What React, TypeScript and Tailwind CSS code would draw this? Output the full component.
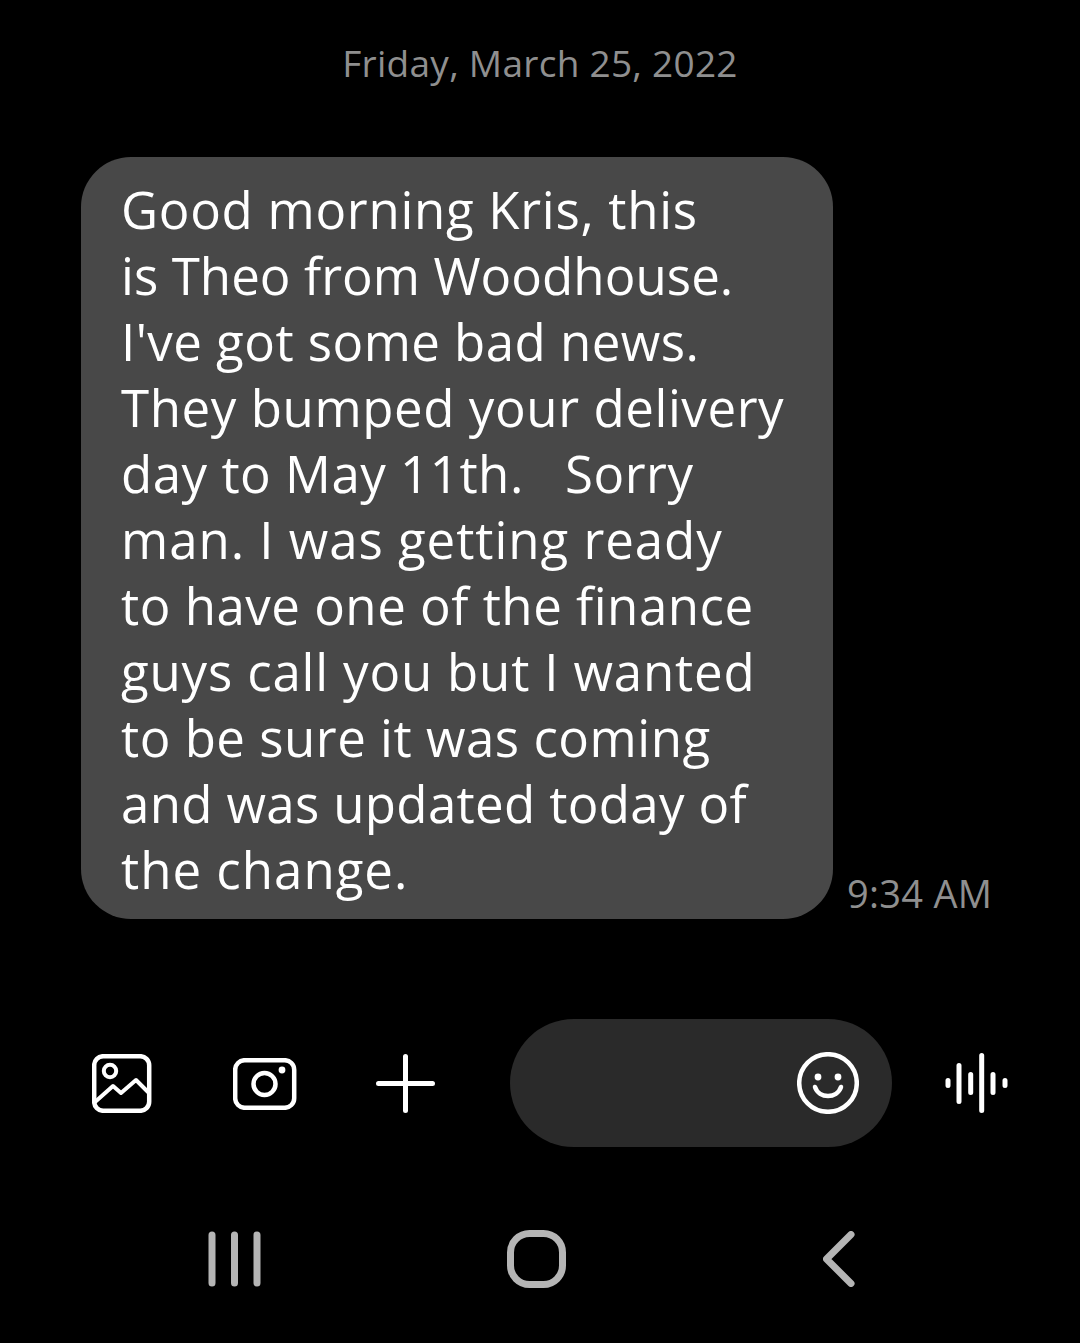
const F = '"Open Sans", "Noto Sans", sans-serif';
const lines = [
  { text: "Good morning Kris, this", cls: "tracking-[0.72px]" },
  { text: "is Theo from Woodhouse.", cls: "tracking-[0.07px]" },
  { text: "I've got some bad news.", cls: "tracking-[0.46px]" },
  { text: "They bumped your delivery", cls: "tracking-[0.59px]" },
  { text: "day to May 11th.\u00A0\u00A0 Sorry", cls: "tracking-[0.51px]" },
  { text: "man. I was getting ready", cls: "tracking-[0.96px]" },
  { text: "to have one of the finance", cls: "tracking-[0.51px]" },
  { text: "guys call you but I wanted", cls: "tracking-[0.82px]" },
  { text: "to be sure it was coming", cls: "tracking-[0.51px]" },
  { text: "and was updated today of", cls: "tracking-[0.34px]" },
  { text: "the change.", cls: "tracking-[1px]" },
];
export default function App() {
  return (
    <div className="w-[1080px] h-[1343px] bg-black flex flex-col overflow-hidden" style={{ fontFamily: F }}>
      <div className="h-[157px] pt-[38px] text-center text-[37px] leading-[50px] text-[#8f8f8f] tracking-[0.27px]">Friday, March 25, 2022</div>
      <div className="flex items-end pl-[81px]">
        <div className="w-[752px] h-[762px] rounded-[50px] bg-[#484848] pl-[40px] pt-[19px] text-[51px] leading-[66px] text-white">
          {lines.map((l) => <div key={l.text} className={`whitespace-pre ${l.cls}`}>{l.text}</div>)}
        </div>
        <div className="ml-[14px] mb-[1px] text-[38px] leading-[50px] tracking-[0.3px] text-[#8f8f8f]">9:34 AM</div>
      </div>
      <div className="mt-[100px] h-[128px] flex items-center">
        <svg className="ml-[92px] mt-[1px] w-[60px] h-[59px]" viewBox="0 0 60 59" fill="none" stroke="#fff" strokeWidth="4.5" strokeLinecap="round" strokeLinejoin="round">
          <rect x="2.2" y="2.2" width="55" height="54.6" rx="9" />
          <circle cx="18" cy="17" r="6.2" strokeWidth="4" />
          <path d="M3 48 L21 32 L29 39 L44 26 L57 39" strokeWidth="4" />
        </svg>
        <svg className="ml-[81px] mt-[2px] w-[64px] h-[52px]" viewBox="0 0 64 52" fill="none" stroke="#fff" strokeWidth="4.5">
          <rect x="2.2" y="2.2" width="59" height="47.6" rx="9.5" />
          <circle cx="31.5" cy="26" r="11" />
          <circle cx="49" cy="12" r="3.4" fill="#fff" stroke="none" />
        </svg>
        <svg className="ml-[79px] mt-[1px] w-[59px] h-[59px]" viewBox="0 0 59 59" fill="none" stroke="#fff" strokeWidth="5" strokeLinecap="round">
          <path d="M29.5 2.5 V56.5 M2.5 29.5 H56.5" />
        </svg>
        <div className="ml-[75px] w-[382px] h-[128px] rounded-full bg-[#2a2a2a] flex items-center justify-end pr-[33px]">
          <svg className="w-[62px] h-[62px]" viewBox="0 0 62 62" fill="none" stroke="#fff" strokeWidth="4.5" strokeLinecap="round">
            <circle cx="31" cy="31" r="28.8" />
            <circle cx="21" cy="25" r="3.4" fill="#fff" stroke="none" />
            <circle cx="41" cy="25" r="3.4" fill="#fff" stroke="none" />
            <path d="M18 35 C 22 47, 40 47, 44 35" />
          </svg>
        </div>
        <svg className="ml-[53px] w-[64px] h-[62px]" viewBox="0 0 64 62" fill="none" stroke="#fff" strokeLinecap="round" strokeWidth="5">
          <path d="M3 28.5 V33.5 M14 13.5 V49.5 M25.7 22.5 V40.5 M36.7 3.5 V58.5 M48 22.5 V40.5 M60 28.5 V33.5" />
        </svg>
      </div>
      <div className="mt-[83px] h-[58px] flex items-center">
        <svg className="ml-[208px] w-[54px] h-[56px]" viewBox="0 0 54 56" fill="none" stroke="#b5b5b5" strokeWidth="7" strokeLinecap="round">
          <path d="M4 4 V52 M26.5 4 V52 M49 4 V52" />
        </svg>
        <svg className="ml-[245px] w-[60px] h-[58px]" viewBox="0 0 60 58" fill="none" stroke="#b5b5b5" strokeWidth="7">
          <rect x="3.5" y="3.5" width="52" height="51" rx="19" />
        </svg>
        <svg className="ml-[256px] w-[34px] h-[56px]" viewBox="0 0 34 56" fill="none" stroke="#b5b5b5" strokeWidth="7" strokeLinecap="round" strokeLinejoin="round">
          <path d="M28 3.5 L3.5 28 L28 52.5" />
        </svg>
      </div>
    </div>
  );
}
